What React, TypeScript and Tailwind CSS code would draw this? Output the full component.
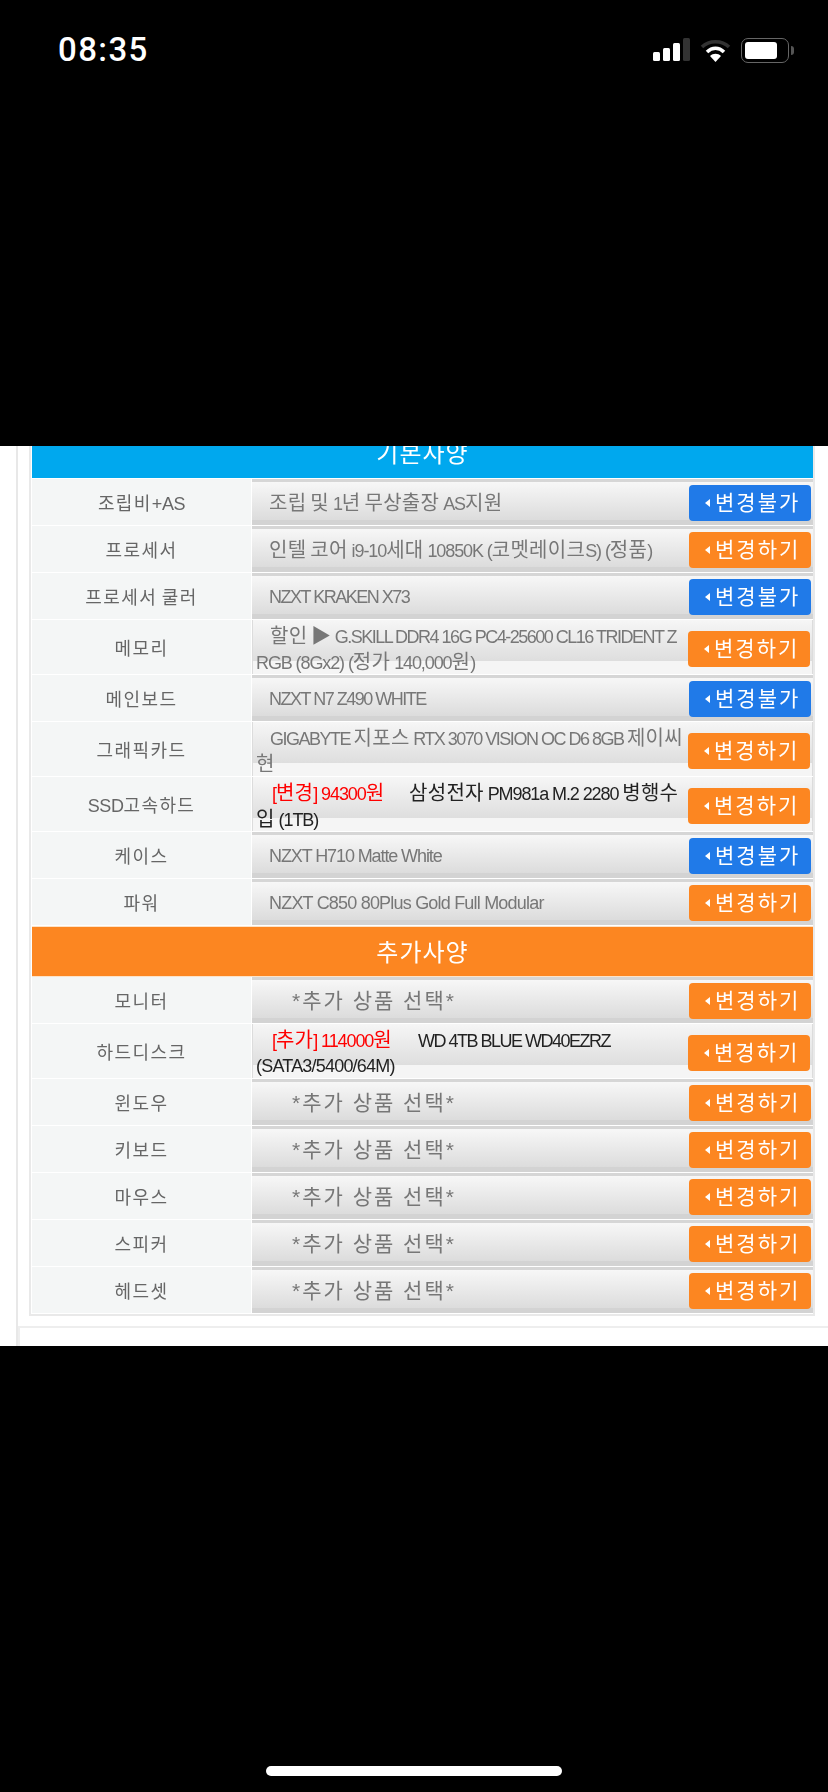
import type { ReactNode } from "react";

type Row = {
  label: string;
  locked?: boolean;
  tall?: boolean;
  content: ReactNode;
};

type Fit = "normal" | "tight" | "loose";

// hangul runs in the shot are wide and the latin runs are squeezed together
function Mixed({ text, fit = "normal" }: { text: string; fit?: Fit }) {
  const latin =
    fit === "tight" ? "tracking-[-1.5px]" : fit === "loose" ? "tracking-[-0.8px]" : "tracking-[-1.1px]";
  const parts = text.split(/([가-힣▶]+)/);
  return (
    <>
      {parts.map((part, i) =>
        i % 2 === 1 ? (
          <span key={i} className="text-[20px] tracking-[0.3px]">
            {part}
          </span>
        ) : (
          <span key={i} className={`text-[18px] ${latin}`}>
            {part}
          </span>
        ),
      )}
    </>
  );
}

function Plain({ text, fit }: { text: string; fit?: Fit }) {
  return (
    <span className="pl-[14px] text-[#777]">
      <Mixed text={text} fit={fit} />
    </span>
  );
}

function Empty() {
  return <span className="pl-[37px] text-[21px] tracking-[2px] text-[#777]">*추가 상품 선택*</span>;
}

const basicRows: Row[] = [
  { label: "조립비+AS", locked: true, content: <Plain text="조립 및 1년 무상출장 AS지원" /> },
  { label: "프로세서", content: <Plain text="인텔 코어 i9-10세대 10850K (코멧레이크S) (정품)" /> },
  { label: "프로세서 쿨러", locked: true, content: <Plain text="NZXT KRAKEN X73" fit="tight" /> },
  {
    label: "메모리",
    tall: true,
    content: (
      <span className="text-[#777]">
        <span className="pl-[14px]">
          <Mixed text="할인 ▶ G.SKILL DDR4 16G PC4-25600 CL16 TRIDENT Z" fit="tight" />
        </span>
        <br />
        <Mixed text="RGB (8Gx2) (정가 140,000원)" />
      </span>
    ),
  },
  { label: "메인보드", locked: true, content: <Plain text="NZXT N7 Z490 WHITE" fit="tight" /> },
  {
    label: "그래픽카드",
    tall: true,
    content: (
      <span className="text-[#777]">
        <span className="pl-[14px]">
          <Mixed text="GIGABYTE 지포스 RTX 3070 VISION OC D6 8GB 제이씨" fit="tight" />
        </span>
        <br />
        <Mixed text="현" />
      </span>
    ),
  },
  {
    label: "SSD고속하드",
    tall: true,
    content: (
      <span className="text-[#222]">
        <span className="inline-block w-[153px] pl-[16px] text-[#f00]">
          <Mixed text="[변경] 94300원" />
        </span>
        <Mixed text="삼성전자 PM981a M.2 2280 병행수" />
        <br />
        <Mixed text="입 (1TB)" />
      </span>
    ),
  },
  { label: "케이스", locked: true, content: <Plain text="NZXT H710 Matte White" /> },
  { label: "파워", content: <Plain text="NZXT C850 80Plus Gold Full Modular" fit="loose" /> },
];

const extraRows: Row[] = [
  { label: "모니터", content: <Empty /> },
  {
    label: "하드디스크",
    tall: true,
    content: (
      <span className="text-[#222]">
        <span className="inline-block w-[162px] pl-[16px] text-[#f00]">
          <Mixed text="[추가] 114000원" />
        </span>
        <Mixed text="WD 4TB BLUE WD40EZRZ" fit="tight" />
        <br />
        <Mixed text="(SATA3/5400/64M)" fit="loose" />
      </span>
    ),
  },
  { label: "윈도우", content: <Empty /> },
  { label: "키보드", content: <Empty /> },
  { label: "마우스", content: <Empty /> },
  { label: "스피커", content: <Empty /> },
  { label: "헤드셋", content: <Empty /> },
];

function ChangeButton({ locked, tall }: { locked?: boolean; tall?: boolean }) {
  return (
    <div
      className={`flex h-[36px] w-[122px] shrink-0 items-center rounded-[4px] pl-[16px] text-[21px] tracking-[2px] text-white ${
        locked ? "bg-[#207ae8]" : "bg-[#fc8621]"
      } ${tall ? "mt-[4px]" : "mt-[2px]"}`}
    >
      <span className="mr-[5px] h-0 w-0 border-y-[4px] border-r-[5px] border-y-transparent border-r-white" />
      {locked ? "변경불가" : "변경하기"}
    </div>
  );
}

function RowLabel({ text }: { text: string }) {
  const parts = text.split(/([가-힣]+)/);
  return (
    <>
      {parts.map((part, i) => (
        <span key={i} className={i % 2 === 1 ? "tracking-[1.4px]" : "tracking-[-0.4px]"}>
          {part}
        </span>
      ))}
    </>
  );
}

function SpecRow({ row }: { row: Row }) {
  return (
    <div className={`flex border-b-[1.5px] border-white ${row.tall ? "h-[55px]" : "h-[47px]"}`}>
      <div className="flex w-[220px] shrink-0 items-center justify-center whitespace-pre border-r-[1.5px] border-white bg-[#f4f6f6] pt-[4px] text-[18px] text-[#666]">
        <RowLabel text={row.label} />
      </div>
      <div
        className={`flex min-w-0 flex-1 items-center justify-between pl-[3px] pr-[2px] ${
          row.tall
            ? "border-x border-[#dcdcdc] bg-[#f5f5f5] bg-[linear-gradient(#f6f6f6,#dedede)] bg-[length:100%_41px] bg-no-repeat"
            : "bg-[linear-gradient(#d6d6d6_0,#d6d6d6_3px,#f7f7f7_3px,#dcdcdc_41px,#d3d3d3_41px,#d3d3d3_47px)]"
        }`}
      >
        <div className={`min-w-0 flex-1 whitespace-pre leading-[25px] ${row.tall ? "pt-[5px]" : "pt-[3px]"}`}>
          {row.content}
        </div>
        <ChangeButton locked={row.locked} tall={row.tall} />
      </div>
    </div>
  );
}

function StatusIcons() {
  return (
    <div className="flex items-center">
      <svg width="37" height="23" viewBox="0 0 37 23" className="mt-[-1px]">
        <rect x="0" y="14" width="7" height="9" rx="1.5" fill="#fff" />
        <rect x="10" y="10" width="7" height="13" rx="1.5" fill="#fff" />
        <rect x="20" y="5" width="7" height="18" rx="1.5" fill="#fff" />
        <rect x="30" y="0" width="7" height="23" rx="1.5" fill="#333" />
      </svg>
      <svg width="31" height="23" viewBox="0 0 31 23" className="ml-[10px]">
        <path d="M2 8 C9 1 22 1 29 8" fill="none" stroke="#333" strokeWidth="3.5" />
        <path d="M7 13 C12 8 19 8 24 13" fill="none" stroke="#fff" strokeWidth="3.5" />
        <path d="M10 17 C13 14 18 14 21 17 L15.5 23 Z" fill="#fff" />
      </svg>
      <div className="ml-[10px] flex h-[25px] w-[48px] items-center rounded-[7px] border-[1.5px] border-[#666] pl-[3px]">
        <div className="h-[17px] w-[32px] rounded-[3px] bg-white" />
      </div>
      <div className="ml-[2px] h-[9px] w-[3px] rounded-r-[3px] bg-[#555]" />
    </div>
  );
}

export default function App() {
  return (
    <div className="flex h-[1792px] w-[828px] flex-col overflow-hidden bg-black font-['Liberation_Sans','Noto_Sans_CJK_KR',sans-serif]">
      <div className="h-[446px] shrink-0">
        <div className="flex items-center justify-between pl-[58px] pr-[34px] pt-[32px]">
          <span className="font-['Roboto',sans-serif] text-[33px] font-medium leading-[36px] tracking-[1.4px] text-white">
            08:35
          </span>
          <StatusIcons />
        </div>
      </div>

      {/* page fragment */}
      <div className="h-[900px] shrink-0 overflow-hidden bg-white pl-[16px]">
        <div className="h-full border-l-2 border-[#e8e8e8] blur-[0.5px]">
          <div className="ml-[11px] mr-[13px] w-[786px] border-x-2 border-b-2 border-[#e9e9e9] pl-[1px]">
            <div className="flex h-[33px] items-end overflow-hidden border-b border-white bg-[#00a8ee]">
              <div className="flex h-[51px] w-full items-center justify-center pt-[3px] text-[24px] tracking-[1px] text-white">
                기본사양
              </div>
            </div>
            {basicRows.map((row) => (
              <SpecRow key={row.label} row={row} />
            ))}
            <div className="flex h-[51px] items-center justify-center border-y border-[#fde3c8] bg-[#fc8621] pt-[2px] text-[24px] tracking-[1px] text-white">
              추가사양
            </div>
            {extraRows.map((row) => (
              <SpecRow key={row.label} row={row} />
            ))}
          </div>
          <div className="mt-[10px] h-[40px] border-l-2 border-t-2 border-[#eeeeee]" />
        </div>
      </div>

      <div className="flex flex-1 items-start justify-center pt-[420px]">
        <div className="h-[10px] w-[296px] rounded-full bg-white" />
      </div>
    </div>
  );
}
